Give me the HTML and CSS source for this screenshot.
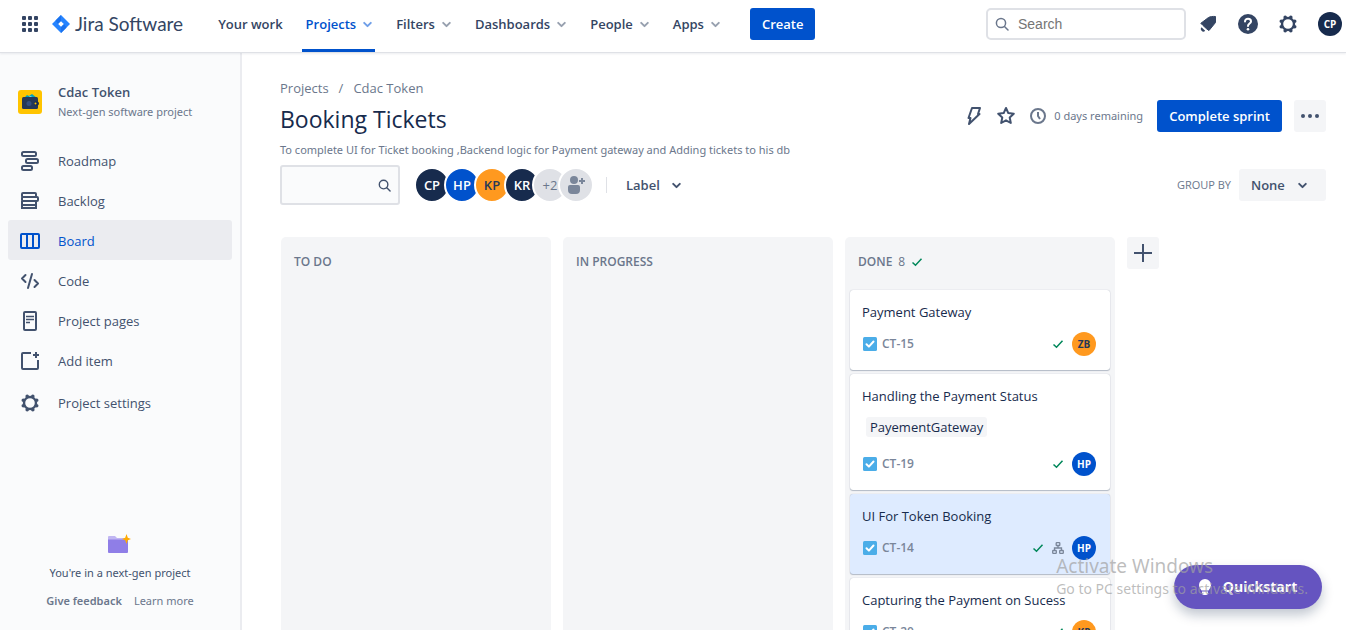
FILE: index.html
```html
<!DOCTYPE html>
<html lang="en">
<head>
<meta charset="utf-8">
<title>Booking Tickets - Jira Software</title>
<link rel="stylesheet" href="styles.css">
</head>
<body>
<svg class="defs" aria-hidden="true">
  <symbol id="chevron" viewBox="0 0 10 10"><path d="M2 3.5 5 6.5 8 3.5" fill="none" stroke="currentColor" stroke-width="1.800" stroke-linecap="round" stroke-linejoin="round"/></symbol>
  <symbol id="magnifier" viewBox="0 0 14 14"><circle cx="6" cy="6" r="4.6" fill="none" stroke="currentColor" stroke-width="1.5"/><path d="M9.5 9.5 13 13" stroke="currentColor" stroke-width="1.5" stroke-linecap="round"/></symbol>
  <symbol id="gear" viewBox="0 0 20 20"><circle cx="10" cy="10" r="6" fill="none" stroke="currentColor" stroke-width="2.4"/><g stroke="currentColor" stroke-width="3.6" stroke-linecap="round"><path d="M7.200 3.300v0M12.800 3.300v0M16.700 7.200v0M16.700 12.800v0M12.800 16.700v0M7.200 16.700v0M3.300 12.800v0M3.300 7.200v0"/></g></symbol>
  <symbol id="check" viewBox="0 0 12 12"><path d="M1.500 6.500 4.500 9.300 10.500 2.800" fill="none" stroke="currentColor" stroke-width="1.500"/></symbol>
  <symbol id="task" viewBox="0 0 14 14"><rect width="14" height="14" rx="1.500" fill="#4bade8"/><path d="M3.500 7.300 5.900 9.600 10.500 4.500" fill="none" stroke="#fff" stroke-width="2" stroke-linecap="round" stroke-linejoin="round"/></symbol>
</svg>

<header class="topbar">
  <button class="icon-btn switcher" aria-label="Switch to">
    <svg width="16" height="16" viewBox="0 0 16 16" fill="#344563"><rect width="4" height="4" rx="1"/><rect x="6" width="4" height="4" rx="1"/><rect x="12" width="4" height="4" rx="1"/><rect y="6" width="4" height="4" rx="1"/><rect x="6" y="6" width="4" height="4" rx="1"/><rect x="12" y="6" width="4" height="4" rx="1"/><rect y="12" width="4" height="4" rx="1"/><rect x="6" y="12" width="4" height="4" rx="1"/><rect x="12" y="12" width="4" height="4" rx="1"/></svg>
  </button>
  <a class="brand" href="#">
    <svg width="18" height="18" viewBox="0 0 18 18"><path d="M9 0 18 9 9 18 0 9z" fill="#2684ff"/><path d="M9 0v6L6 9 3.500 5.500zM9 18v-6l3-3 2.500 3.500z" fill="#1a72ee"/><path d="M9 6.200 11.800 9 9 11.800 6.200 9z" fill="#fff"/></svg>
    <span>Jira Software</span>
  </a>
  <nav class="mainnav">
    <a href="#">Your work</a>
    <a class="current" href="#">Projects <svg class="chev"><use href="#chevron"/></svg></a>
    <a href="#">Filters <svg class="chev"><use href="#chevron"/></svg></a>
    <a href="#">Dashboards <svg class="chev"><use href="#chevron"/></svg></a>
    <a href="#">People <svg class="chev"><use href="#chevron"/></svg></a>
    <a href="#">Apps <svg class="chev"><use href="#chevron"/></svg></a>
  </nav>
  <button class="btn primary create">Create</button>
  <label class="search">
    <svg width="14" height="14"><use href="#magnifier"/></svg>
    <input type="search" placeholder="Search" aria-label="Search">
  </label>
  <div class="tools">
    <button class="icon-btn" aria-label="Notifications"><svg width="20" height="20" viewBox="0 0 20 20" fill="#344563"><path d="M17.500 2.500v6L11 16.500 8.800 15 5 11.500 2.800 9.300 10.500 3.500C12 2.500 15 2.300 17.500 2.500z" stroke="#344563" stroke-linejoin="round"/><path d="M3.500 13.200 7.200 16.800A2.500 2.500 0 0 1 3.500 13.200z"/></svg></button>
    <button class="icon-btn" aria-label="Help"><svg width="20" height="20" viewBox="0 0 20 20"><circle cx="10" cy="10" r="10" fill="#344563"/><path d="M7 7.600C7 5.900 8.300 4.800 10 4.800s3 1.100 3 2.700c0 2-3 2.200-3 4.500" fill="none" stroke="#fff" stroke-width="2" stroke-linecap="round"/><circle cx="10" cy="15.200" r="1.300" fill="#fff"/></svg></button>
    <button class="icon-btn" aria-label="Settings"><svg width="20" height="20"><use href="#gear"/></svg></button>
    <button class="avatar small navy" aria-label="Your profile">CP</button>
  </div>
</header>

<div class="layout">
  <aside class="sidebar">
    <div class="project">
      <svg width="24" height="24" viewBox="0 0 24 24"><rect width="24" height="24" rx="3" fill="#ffc400"/><path d="M6 8 9 5l2 1 3-2 5 4z" fill="#00a3bf"/><path d="m10 8 2-2 5 2z" fill="#79e2f2"/><rect x="4" y="7" width="16" height="12" rx="1.500" fill="#253858"/><circle cx="11" cy="13.500" r="2.500" fill="#344f80"/><rect x="16" y="11.500" width="5" height="4" rx="2" fill="#172b4d"/><circle cx="17.500" cy="13.500" r="1" fill="#ffc400"/></svg>
      <div><strong>Cdac Token</strong><small>Next-gen software project</small></div>
    </div>
    <nav class="sidenav">
      <a href="#"><svg width="20" height="20" viewBox="0 0 20 20" fill="none" stroke="currentColor" stroke-width="2"><rect x="2" y="1" width="14" height="4" rx="1.500"/><rect x="6" y="8" width="12" height="4" rx="1.500"/><rect x="2" y="15" width="10" height="4" rx="1.500"/></svg>Roadmap</a>
      <a href="#"><svg width="20" height="20" viewBox="0 0 20 20" fill="none" stroke="currentColor" stroke-width="2"><rect x="2" y="2" width="14" height="4" rx="1"/><rect x="2" y="6" width="16" height="4" rx="1"/><path d="M2 10v7h14v-7M2 14h14"/></svg>Backlog</a>
      <a class="current" href="#"><svg width="20" height="20" viewBox="0 0 20 20" fill="none" stroke="currentColor" stroke-width="2"><rect x="1" y="3" width="18" height="14" rx="1"/><path d="M7 3v14M13 3v14"/></svg>Board</a>
      <a href="#"><svg width="20" height="20" viewBox="0 0 20 20" fill="none" stroke="currentColor" stroke-width="2" stroke-linecap="round" stroke-linejoin="round"><path d="M5.500 4 2 7.500 5.500 11M14.500 9 18 12.500 14.500 16M12 3 8 17"/></svg>Code</a>
      <a href="#"><svg width="20" height="20" viewBox="0 0 20 20" fill="none" stroke="currentColor" stroke-width="2"><rect x="4" y="1" width="12" height="18" rx="1"/><path d="M6 5.500h8M6 8.500h8M6 11.500h4" stroke-width="1.500"/></svg>Project pages</a>
      <a href="#"><svg width="20" height="20" viewBox="0 0 20 20" fill="none" stroke="currentColor" stroke-width="2"><path d="M11 2H3a1 1 0 0 0-1 1v14a1 1 0 0 0 1 1h14a1 1 0 0 0 1-1V9" /><path d="M16 1v6M13 4h6"/></svg>Add item</a>
      <a class="settings" href="#"><svg width="20" height="20"><use href="#gear"/></svg>Project settings</a>
    </nav>
    <div class="side-foot">
      <svg width="24" height="20" viewBox="0 0 24 20"><path d="M0 3a1 1 0 0 1 1-1h6l2 2h10a1 1 0 0 1 1 1v3H0z" fill="#c0b6f2"/><path d="M0 5.500h20V18a1 1 0 0 1-1 1H1a1 1 0 0 1-1-1z" fill="#8f7ee7"/><path d="m18.500 0 1.300 3.700L23 5l-3.200 1.300L18.500 10l-1.300-3.700L14 5l3.200-1.300z" fill="#ffab00"/></svg>
      <p>You're in a next-gen project</p>
      <div class="foot-links"><a class="strong" href="#">Give feedback</a><a href="#">Learn more</a></div>
    </div>
  </aside>

  <main class="content">
    <div class="heading">
      <div>
        <nav class="crumbs"><a href="#">Projects</a><span>/</span><a href="#">Cdac Token</a></nav>
        <h1>Booking Tickets</h1>
      </div>
      <div class="actions">
        <button class="icon-btn" aria-label="Automation"><svg width="20" height="20" viewBox="0 0 20 20" fill="none" stroke="#42526e" stroke-width="2" stroke-linejoin="round"><path d="M8 2h8l-2 6h1.500L5 18l1.500-6H4.500z"/></svg></button>
        <button class="icon-btn" aria-label="Star"><svg width="20" height="20" viewBox="0 0 20 20" fill="none" stroke="#42526e" stroke-width="2" stroke-linejoin="round"><path d="m10 2 2.300 5.100 5.500.6-4.100 3.800 1.100 5.500L10 14.300 5.200 17l1.100-5.500-4.100-3.800 5.500-.6z"/></svg></button>
        <span class="remaining"><svg width="16" height="16" viewBox="0 0 16 16" fill="none" stroke="#6b778c"><circle cx="8" cy="8" r="7" stroke-width="2"/><path d="M8 4v4l2 3" stroke-width="2"/></svg>0 days remaining</span>
        <button class="btn primary">Complete sprint</button>
        <button class="btn square" aria-label="More"><svg width="20" height="20" viewBox="0 0 20 20" fill="#42526e"><circle cx="3" cy="10" r="2"/><circle cx="10" cy="10" r="2"/><circle cx="17" cy="10" r="2"/></svg></button>
      </div>
    </div>
    <p class="goal">To complete UI for Ticket booking ,Backend logic for Payment gateway and Adding tickets to his db</p>

    <div class="toolbar">
      <label class="board-search"><input type="search" aria-label="Search this board"><svg width="13" height="13"><use href="#magnifier"/></svg></label>
      <div class="people">
        <button class="avatar navy">CP</button><button class="avatar blue">HP</button><button class="avatar orange">KP</button><button class="avatar navy">KR</button><button class="avatar gray">+2</button><button class="avatar gray add" aria-label="Add people"><svg width="20" height="20" viewBox="0 0 20 20" fill="#7a869a"><circle cx="8" cy="5" r="4"/><path d="M2 12a2 2 0 0 1 2-2h8a2 2 0 0 1 2 2v3a4 4 0 0 1-4 4H6a4 4 0 0 1-4-4zM15 3h2v2h2v2h-2v2h-2V7h-2V5h2z"/></svg></button>
      </div>
      <button class="filter">Label <svg class="chev"><use href="#chevron"/></svg></button>
      <label class="group-label" for="group">GROUP BY</label>
      <div class="select"><select id="group"><option>None</option></select><svg class="chev"><use href="#chevron"/></svg></div>
    </div>

    <div class="board">
      <section class="column"><h2>TO DO</h2></section>
      <section class="column"><h2>IN PROGRESS</h2></section>
      <section class="column">
        <h2>DONE <span>8</span> <svg class="check"><use href="#check"/></svg></h2>
        <div class="cards">
          <article class="card">
            <h3>Payment Gateway</h3>
            <div class="meta"><svg class="task"><use href="#task"/></svg><span>CT-15</span><svg class="check"><use href="#check"/></svg><b class="avatar small orange">ZB</b></div>
          </article>
          <article class="card">
            <h3>Handling the Payment Status</h3>
            <span class="tag">PayementGateway</span>
            <div class="meta"><svg class="task"><use href="#task"/></svg><span>CT-19</span><svg class="check"><use href="#check"/></svg><b class="avatar small blue">HP</b></div>
          </article>
          <article class="card selected">
            <h3>UI For Token Booking</h3>
            <div class="meta"><svg class="task"><use href="#task"/></svg><span>CT-14</span><svg class="check"><use href="#check"/></svg><svg width="12" height="12" viewBox="0 0 12 12" fill="none" stroke="#7a869a" stroke-width="1.300"><rect x="4.200" y=".7" width="3.600" height="2.800" rx=".6"/><rect x=".7" y="8.500" width="3.600" height="2.800" rx=".6"/><rect x="7.700" y="8.500" width="3.600" height="2.800" rx=".6"/><path d="M6 3.500V6M2.500 8.500V6h7v2.500"/></svg><b class="avatar small blue">HP</b></div>
          </article>
          <article class="card">
            <h3>Capturing the Payment on Sucess</h3>
            <div class="meta"><svg class="task"><use href="#task"/></svg><span>CT-20</span><svg class="check"><use href="#check"/></svg><b class="avatar small orange">KP</b></div>
          </article>
        </div>
      </section>
      <button class="btn square" aria-label="Create column"><svg width="18" height="18" viewBox="0 0 18 18"><path d="M9 0v18M0 9h18" stroke="#42526e" stroke-width="2"/></svg></button>
    </div>
  </main>
</div>

<button class="quickstart"><svg width="12" height="16" viewBox="0 0 12 16" fill="#fff"><path d="M6 0a6 6 0 0 1 6 6c0 2.500-1.500 3.500-2.500 5.500h-7C1.500 9.500 0 8.500 0 6a6 6 0 0 1 6-6zM3 12.500h6V14a2 2 0 0 1-2 2H5a2 2 0 0 1-2-2z"/></svg>Quickstart</button>
<div class="watermark"><p class="wm-title">Activate Windows</p><p>Go to PC settings to activate Windows.</p></div>
</body>
</html>
```
FILE: styles.css
```css
* { box-sizing: border-box; }
body {
  margin: 0;
  height: 100vh;
  display: flex;
  flex-direction: column;
  overflow: hidden;
  font: 13px/20px "Open Sans", "Noto Sans", sans-serif;
  color: #172b4d;
  background: #fff;
}
a { color: inherit; text-decoration: none; }
button, input, select { font: inherit; color: inherit; border: 0; padding: 0; background: none; }
h1, h2, h3, p { margin: 0; }
svg { flex: none; display: block; }
.defs { position: absolute; width: 0; height: 0; }
.chev { width: 11px; height: 11px; }
.check { width: 12px; height: 12px; color: #00875a; }
.task { width: 14px; height: 14px; }
.icon-btn { display: flex; align-items: center; justify-content: center; color: #344563; }

.btn { height: 32px; padding: 0 12px; border-radius: 3px; font-weight: 600; }
.primary { background: #0052cc; color: #fff; }
.square { width: 32px; padding: 0; display: flex; align-items: center; justify-content: center; background: #f4f5f7; }

.avatar { width: 32px; height: 32px; border-radius: 50%; display: flex; align-items: center; justify-content: center; font-size: 13px; font-weight: 600; flex: none; }
.avatar.small { width: 24px; height: 24px; font-size: 10px; font-weight: 700; }
.navy { background: #172b4d; color: #fff; }
.blue { background: #0052cc; color: #fff; }
.orange { background: #ff991f; color: #253858; }
.avatar.gray { background: #dfe1e6; color: #6b778c; font-weight: 400; }

.topbar { flex: none; height: 53px; display: flex; align-items: center; padding: 0 4px 5px 22px; border-bottom: 1px solid #dfe1e6; box-shadow: 0 1px 2px #091e4214; z-index: 1; }
.brand { display: flex; align-items: center; gap: 5px; margin-left: 14px; font: 19px/24px Lato, sans-serif; color: #344563; }
.mainnav { align-self: stretch; display: flex; gap: 17px; margin: 0 0 -5px 31px; font-weight: 600; color: #344563; }
.mainnav a { display: flex; align-items: center; gap: 6px; padding: 0 2px 1px 4px; border-bottom: 3px solid transparent; }
.mainnav .chev { color: #97a0af; }
.mainnav .current { color: #0052cc; border-color: #0052cc; }
.mainnav .current .chev { color: #6f9fe8; }
.create { margin-left: 27px; }
.search { margin-left: auto; width: 200px; height: 32px; display: flex; align-items: center; gap: 9px; padding: 0 7px; border: 2px solid #dfe1e6; border-radius: 5px; color: #6b778c; }
.search input { min-width: 0; flex: 1; outline: 0; font: 14px/20px "Liberation Sans", Arial, sans-serif; }
.search input::placeholder { color: #757575; opacity: 1; }
.tools { display: flex; align-items: center; gap: 20px; margin-left: 12px; }

.layout { flex: 1; min-height: 0; display: flex; }
.sidebar { width: 242px; flex: none; display: flex; flex-direction: column; background: #fafbfc; border-right: 2px solid #ebecf0; color: #42526e; }
.project { display: flex; align-items: center; gap: 16px; padding: 30px 18px 19px; }
.project strong, .project small { display: block; line-height: 19px; }
.project strong { font-weight: 600; }
.project small { font: 11px/19px "Noto Sans", sans-serif; color: #6b778c; white-space: nowrap; }
.sidenav { padding: 0 8px; }
.sidenav a { height: 40px; display: flex; align-items: center; gap: 18px; padding: 1px 12px 0; border-radius: 3px; }
.sidenav .current { background: #ebecf0; color: #0052cc; }
.sidenav .settings { margin-top: 2px; }
.side-foot { margin-top: auto; padding-bottom: 19px; display: flex; flex-direction: column; align-items: center; gap: 8px; font: 11px/20px "Noto Sans", sans-serif; }
.foot-links { display: flex; gap: 12px; color: #6b778c; }
.foot-links .strong { font-weight: 600; }
.side-foot p { padding-top: 1px; }

.content { flex: 1; min-width: 0; display: flex; flex-direction: column; padding: 25px 20px 0 38px; }
.heading { display: flex; justify-content: space-between; align-items: flex-end; }
.crumbs { display: flex; gap: 10px; color: #6b778c; }
h1 { margin-top: 7px; font-size: 23px; line-height: 28px; font-weight: 500; }
.actions { display: flex; align-items: center; gap: 12px; padding-bottom: 1px; color: #6b778c; font-size: 13px; }
.remaining { display: flex; align-items: center; gap: 8px; margin: 0 2px; font: 11px/20px "Noto Sans", sans-serif; }
.goal { margin-top: 7px; font: 11px/20px "Noto Sans", sans-serif; color: #6b778c; }
.toolbar { display: flex; align-items: center; margin-top: 5px; }
.board-search { width: 120px; height: 40px; display: flex; align-items: center; padding: 0 7px; border: 2px solid #dfe1e6; border-radius: 3px; background: #fafbfc; color: #42526e; }
.board-search input { flex: 1; min-width: 0; outline: 0; }
.people { display: flex; margin-left: 14px; }
.people .avatar { width: 36px; height: 36px; margin-right: -6px; border: 2px solid #fff; }
.people .gray { margin-left: -2px; }
.people .add { margin-left: -4px; }
.filter { display: flex; align-items: center; gap: 11px; margin-left: 18px; padding-left: 19px; height: 16px; border-left: 1px solid #dfe1e6; font-weight: 600; color: #42526e; }
.group-label { margin-left: auto; font-size: 11px; color: #6b778c; }
.select { display: grid; align-items: center; margin-left: 8px; color: #42526e; }
.select > * { grid-area: 1 / 1; }
.select select { appearance: none; width: 87px; height: 32px; padding-left: 12px; border-radius: 3px; background: #f4f5f7; font-weight: 600; }
.select .chev { justify-self: end; margin-right: 18px; pointer-events: none; }

.board { flex: 1; min-height: 0; display: flex; align-items: flex-start; gap: 12px; margin: 32px 0 0 1px; }
.column { width: 270px; height: 100%; padding: 0 5px; border-radius: 5px 5px 0 0; background: #f4f5f7; overflow: hidden; }
.column h2 { display: flex; align-items: center; gap: 6px; padding: 15px 8px 18px; font-size: 12px; line-height: 20px; font-weight: 600; color: #6b778c; }
.column h2 span { font-weight: 400; }
.cards { display: flex; flex-direction: column; gap: 4px; }
.card { padding: 12px 14px 14px 12px; border-radius: 3px; background: #fff; box-shadow: 0 1px 1px #091e4240, 0 0 1px #091e424f; }
.card.selected { background: #deebff; }
.card h3 { font-size: 13px; line-height: 20px; font-weight: 400; }
.tag { display: table; margin: 11px 0 0 4px; padding: 0 4px; border-radius: 3px; background: #f4f5f7; }
.meta { display: flex; align-items: center; gap: 8px; height: 24px; margin-top: 10px; padding-left: 1px; }
.tag + .meta { margin-top: 15px; }
.meta span { margin: 0 auto 0 -3px; font-size: 12px; font-weight: 600; color: #7a869a; }

.quickstart { position: absolute; right: 24px; bottom: 21px; height: 44px; width: 148px; display: flex; align-items: center; justify-content: center; gap: 12px; border-radius: 22px; background: #6554c0; color: #fff; font-size: 14px; font-weight: 700; box-shadow: 0 6px 12px #091e4240; }
.watermark { position: absolute; right: 38px; bottom: 31px; color: #a0a0a0b0; font: 14px/20px "Noto Sans", sans-serif; pointer-events: none; z-index: 2; white-space: nowrap; }
.wm-title { font-size: 19px; line-height: 26px; }
```
